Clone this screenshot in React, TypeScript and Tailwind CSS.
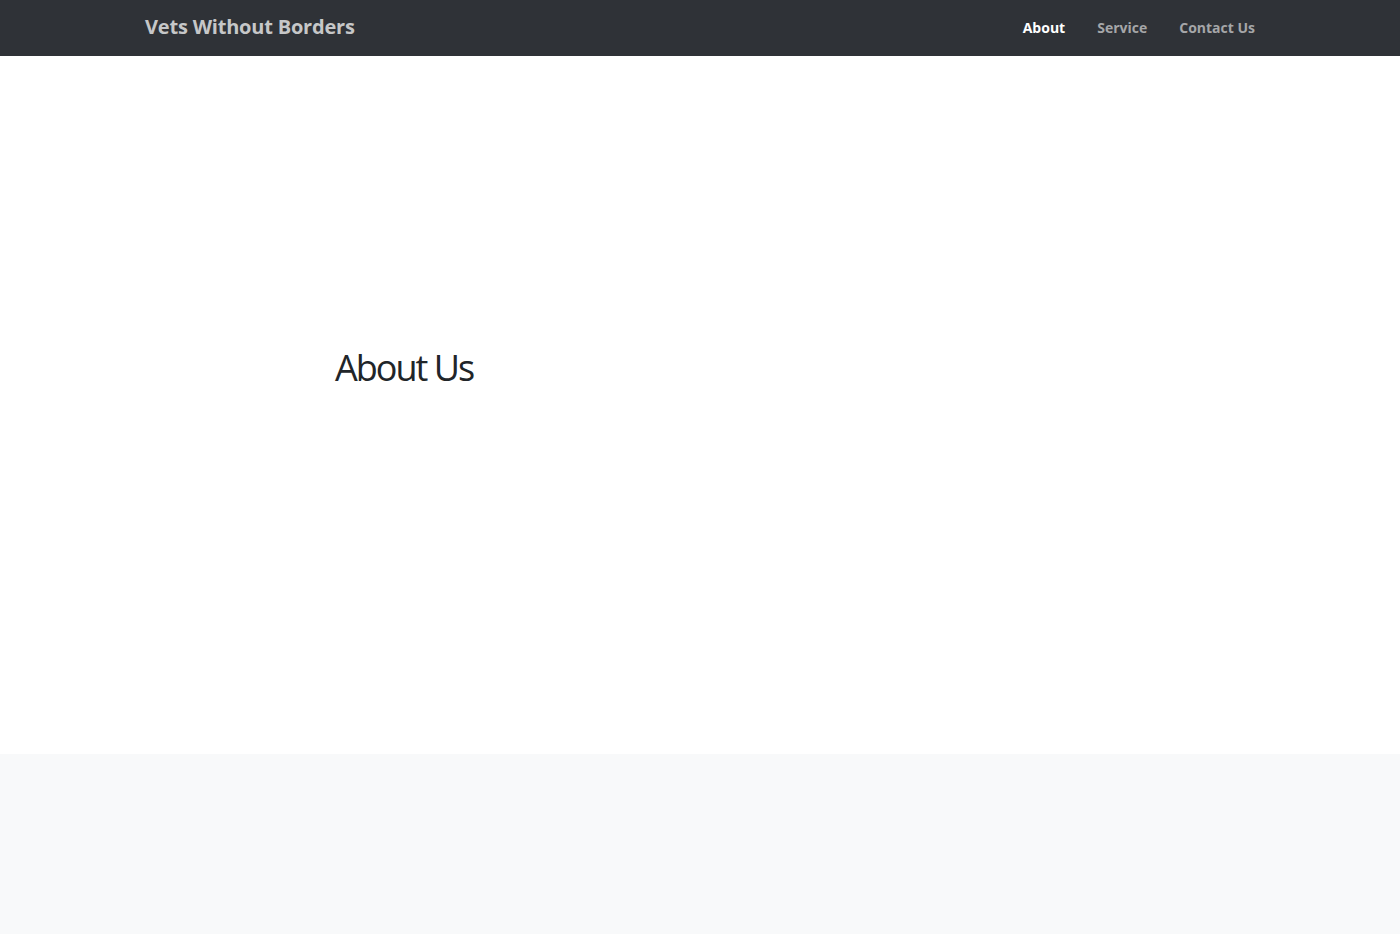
import React from "react";

export default function App() {
  const font = { fontFamily: '"Open Sans", "Noto Sans", sans-serif' };
  return (
    <div className="min-h-[934px] bg-white flex flex-col" style={font}>
      <nav className="h-[56px] bg-[#2f3237] flex items-center">
        <div className="w-[1140px] mx-auto flex items-center justify-between">
          <a className="pl-[15px] text-[20px] font-bold text-[#c6c7c8] tracking-[-0.2px] leading-[28px] -mt-[2px]">Vets Without Borders</a>
          <ul className="flex items-center -mt-[2px]">
            <li className="px-4 text-[14px] font-bold text-white">About</li>
            <li className="px-4 text-[14px] font-bold text-[#a5a6a8]">Service</li>
            <li className="pl-4 pr-[15px] text-[14px] font-bold text-[#a5a6a8]">Contact Us</li>
          </ul>
        </div>
      </nav>
      <section className="h-[698px] flex items-start">
        <div className="w-[1140px] mx-auto pt-[290px]">
          <h1 className="ml-[205px] text-[36px] font-medium leading-[1.2] tracking-[-2px] text-[#212529]">About Us</h1>
        </div>
      </section>
      <footer className="h-[180px] bg-[#f8f9fa]"></footer>
    </div>
  );
}
